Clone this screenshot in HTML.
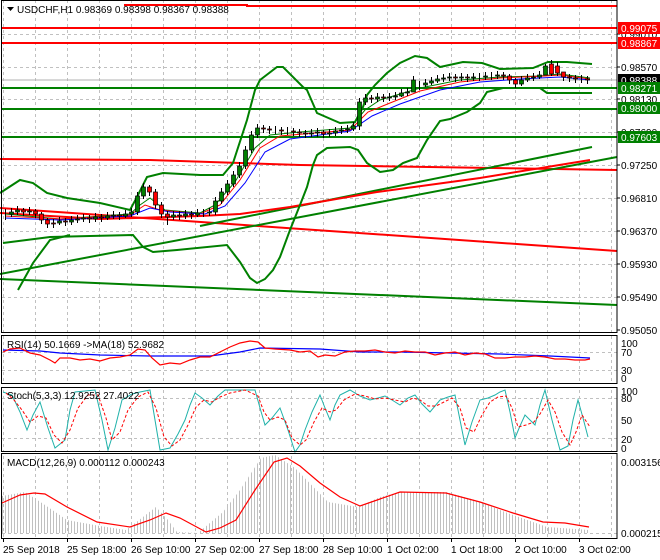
<!DOCTYPE html>
<html><head><meta charset="utf-8"><style>
html,body{margin:0;padding:0;background:#fff;}
svg{display:block;font-family:"Liberation Sans",sans-serif;font-size:10px;}
</style></head><body>
<svg width="660" height="560" xmlns="http://www.w3.org/2000/svg">
<defs>
<pattern id="vg" patternUnits="userSpaceOnUse" x="35" y="0" width="32" height="6"><rect x="0" y="0" width="1" height="3" fill="#c0c0c0"/></pattern>
<pattern id="hb" patternUnits="userSpaceOnUse" x="2" y="0" width="3" height="10"><rect x="0" y="0" width="1" height="10" fill="#c0c0c0"/></pattern>
</defs>
<rect width="660" height="560" fill="#fff"/>
<rect x="2" y="1" width="615" height="331" fill="url(#vg)"/>
<rect x="2" y="336" width="615" height="47" fill="url(#vg)"/>
<rect x="2" y="388" width="615" height="63" fill="url(#vg)"/>
<rect x="2" y="454" width="615" height="84" fill="url(#vg)"/>
<g stroke="#c0c0c0" stroke-dasharray="3,3">
<line x1="2" y1="34.5" x2="617" y2="34.5"/><line x1="2" y1="67.5" x2="617" y2="67.5"/><line x1="2" y1="99.5" x2="617" y2="99.5"/><line x1="2" y1="132.5" x2="617" y2="132.5"/><line x1="2" y1="165.5" x2="617" y2="165.5"/><line x1="2" y1="198.5" x2="617" y2="198.5"/><line x1="2" y1="231.5" x2="617" y2="231.5"/><line x1="2" y1="264.5" x2="617" y2="264.5"/><line x1="2" y1="297.5" x2="617" y2="297.5"/>
<line x1="2" y1="352.5" x2="617" y2="352.5"/><line x1="2" y1="370.5" x2="617" y2="370.5"/><line x1="2" y1="398.5" x2="617" y2="398.5"/><line x1="2" y1="438.5" x2="617" y2="438.5"/><line x1="2" y1="533.5" x2="617" y2="533.5"/>
</g>
<g stroke-width="2" fill="none">
<polyline points="124,5 247,5 247,6 617,6" stroke="#f00"/>
<line x1="2" y1="28" x2="617" y2="28" stroke="#f00"/>
<line x1="2" y1="43" x2="617" y2="43" stroke="#f00"/>
<line x1="2" y1="80" x2="617" y2="80" stroke="#b0b0b0" stroke-width="1"/>
<line x1="2" y1="88" x2="617" y2="88" stroke="#008000"/>
<line x1="2" y1="109" x2="617" y2="109" stroke="#008000"/>
<line x1="2" y1="137" x2="617" y2="137" stroke="#008000"/>
<polyline points="0,159 150,160 300,165 617,170" stroke="#f00"/>
<line x1="0" y1="208" x2="617" y2="251" stroke="#f00"/>
<line x1="0" y1="279" x2="617" y2="305" stroke="#008000"/>
<line x1="0" y1="274" x2="617" y2="157" stroke="#008000"/>
<line x1="200" y1="226" x2="592" y2="147" stroke="#008000"/>
<polyline points="0,213 100,219 200,216 240,214 290,207 377,192 480,178 590,160" stroke="#f00"/>
<polyline stroke="#008000" points="0,193 20,180 33,183 47,193 67,198 100,203 130,210 137,197 147,177 163,173 200,175 223,175 233,163 247,120 255,90 260,80 277,67 283,67 303,87 307,90 317,113 333,120 340,123 355,122 363,107 367,95 375,85 387,73 400,63 415,56 427,58 440,67 463,62 482,63 500,69 533,68 548,62 567,62 592,64"/>
<polyline stroke="#008000" points="3,243 50,237 90,236 133,235 143,247 153,252 177,250 227,245 240,262 250,278 257,283 265,279 273,270 280,257 290,230 300,205 307,187 313,165 317,155 327,148 350,147 358,150 367,163 380,172 393,170 403,163 417,158 427,140 440,121 450,119 467,112 480,103 487,92 503,88 540,88 547,93 592,93"/>
<polyline stroke="#008000" points="18,290 33,263 50,240 70,235"/>
</g>
<g fill="none" stroke-width="1">
<polyline stroke="#008000" points="5,214 60,219 130,214 140,205 150,198 165,210 200,213 215,205 235,182 255,148 270,135 300,132 350,128 365,110 380,100 420,88 460,80 500,77 540,76 560,74 590,78"/>
<polyline stroke="#f00" points="5,216 60,219 130,215 145,205 160,210 200,214 220,205 240,180 260,148 280,136 350,130 368,112 390,103 420,91 460,82 500,78 545,76 560,75 590,79"/>
<polyline stroke="#00f" points="5,218 60,220 130,216 150,208 170,212 205,214 225,206 245,183 265,152 290,139 350,131 372,116 400,104 440,90 480,82 520,79 560,77 590,80"/>
</g>
<path stroke="#000" fill="none" d="M5.5,209V220M11.5,208V217M17.5,206V215M23.5,208V216M29.5,207V215M35.5,209V218M41.5,212V224M47.5,218V228M53.5,219V228M59.5,217V225M65.5,218V226M71.5,216V225M77.5,215V223M83.5,214V222M89.5,215V223M95.5,213V222M101.5,214V222M107.5,212V220M113.5,211V219M119.5,212V220M125.5,210V218M131.5,208V217M137.5,192V215M143.5,183V199M149.5,185V196M155.5,189V209M161.5,202V218M167.5,211V225M173.5,211V220M179.5,211V220M185.5,210V219M191.5,211V219M197.5,209V217M203.5,209V217M209.5,208V216M215.5,197V215M221.5,188V204M227.5,180V195M233.5,171V187M239.5,162V178M245.5,146V169M251.5,131V153M257.5,124V138M263.5,125V133M269.5,126V134M275.5,126V134M281.5,127V135M287.5,127V135M293.5,128V136M299.5,129V137M305.5,130V138M311.5,129V137M317.5,128V137M323.5,130V138M329.5,129V137M335.5,127V136M341.5,126V134M347.5,125V133M353.5,122V131M359.5,98V130M365.5,94V105M371.5,95V103M377.5,93V102M383.5,94V102M389.5,93V101M395.5,92V100M401.5,89V97M407.5,88V96M413.5,76V92M419.5,81V90M425.5,79V87M431.5,77V85M437.5,75V83M443.5,74V82M449.5,73V81M455.5,74V82M461.5,73V81M467.5,74V82M473.5,73V81M479.5,73V81M485.5,72V80M491.5,72V80M497.5,71V79M503.5,72V80M509.5,74V84M515.5,78V88M521.5,76V86M527.5,74V82M533.5,73V81M539.5,71V79M545.5,64V75M551.5,60V76M557.5,62V76M563.5,73V81M569.5,74V82M575.5,75V83M581.5,75V83M587.5,76V84"/>
<g stroke="#000" stroke-width="0.7">
<g fill="#008000">
<rect x="9.5" y="212" width="4" height="2"/><rect x="15.5" y="210" width="4" height="2"/><rect x="27.5" y="211" width="4" height="1"/><rect x="57.5" y="221" width="4" height="2"/><rect x="69.5" y="220" width="4" height="2"/><rect x="75.5" y="219" width="4" height="1"/><rect x="81.5" y="218" width="4" height="1"/><rect x="93.5" y="217" width="4" height="2"/><rect x="105.5" y="216" width="4" height="2"/><rect x="111.5" y="215" width="4" height="1"/><rect x="123.5" y="214" width="4" height="2"/><rect x="129.5" y="212" width="4" height="2"/><rect x="135.5" y="196" width="4" height="16"/><rect x="141.5" y="187" width="4" height="9"/><rect x="171.5" y="215" width="4" height="2"/><rect x="183.5" y="214" width="4" height="2"/><rect x="195.5" y="213" width="4" height="2"/><rect x="207.5" y="212" width="4" height="1"/><rect x="213.5" y="201" width="4" height="11"/><rect x="219.5" y="192" width="4" height="9"/><rect x="225.5" y="184" width="4" height="8"/><rect x="231.5" y="175" width="4" height="9"/><rect x="237.5" y="166" width="4" height="9"/><rect x="243.5" y="150" width="4" height="16"/><rect x="249.5" y="135" width="4" height="15"/><rect x="255.5" y="128" width="4" height="7"/><rect x="309.5" y="133" width="4" height="1"/><rect x="315.5" y="132" width="4" height="1"/><rect x="327.5" y="133" width="4" height="1"/><rect x="333.5" y="131" width="4" height="2"/><rect x="339.5" y="130" width="4" height="1"/><rect x="345.5" y="129" width="4" height="1"/><rect x="351.5" y="126" width="4" height="3"/><rect x="357.5" y="102" width="4" height="24"/><rect x="363.5" y="98" width="4" height="4"/><rect x="375.5" y="97" width="4" height="2"/><rect x="387.5" y="97" width="4" height="1"/><rect x="393.5" y="96" width="4" height="1"/><rect x="399.5" y="93" width="4" height="3"/><rect x="405.5" y="92" width="4" height="1"/><rect x="411.5" y="80" width="4" height="12"/><rect x="423.5" y="83" width="4" height="2"/><rect x="429.5" y="81" width="4" height="2"/><rect x="435.5" y="79" width="4" height="2"/><rect x="441.5" y="78" width="4" height="1"/><rect x="447.5" y="77" width="4" height="1"/><rect x="459.5" y="77" width="4" height="1"/><rect x="471.5" y="77" width="4" height="1"/><rect x="483.5" y="76" width="4" height="1"/><rect x="495.5" y="75" width="4" height="1"/><rect x="519.5" y="80" width="4" height="4"/><rect x="525.5" y="78" width="4" height="2"/><rect x="531.5" y="77" width="4" height="1"/><rect x="537.5" y="75" width="4" height="2"/><rect x="543.5" y="66" width="4" height="9"/>
</g>
<g fill="#f00">
<rect x="21.5" y="210" width="4" height="2"/><rect x="33.5" y="211" width="4" height="3"/><rect x="39.5" y="214" width="4" height="6"/><rect x="45.5" y="220" width="4" height="4"/><rect x="51.5" y="223" width="4" height="1"/><rect x="63.5" y="221" width="4" height="1"/><rect x="87.5" y="218" width="4" height="1"/><rect x="99.5" y="217" width="4" height="1"/><rect x="117.5" y="215" width="4" height="1"/><rect x="147.5" y="187" width="4" height="5"/><rect x="153.5" y="192" width="4" height="13"/><rect x="159.5" y="205" width="4" height="9"/><rect x="165.5" y="214" width="4" height="3"/><rect x="177.5" y="215" width="4" height="1"/><rect x="189.5" y="214" width="4" height="1"/><rect x="261.5" y="128" width="4" height="1"/><rect x="267.5" y="129" width="4" height="1"/><rect x="279.5" y="130" width="4" height="1"/><rect x="291.5" y="131" width="4" height="1"/><rect x="297.5" y="132" width="4" height="1"/><rect x="303.5" y="133" width="4" height="1"/><rect x="321.5" y="132" width="4" height="2"/><rect x="369.5" y="98" width="4" height="1"/><rect x="381.5" y="97" width="4" height="1"/><rect x="453.5" y="77" width="4" height="1"/><rect x="465.5" y="77" width="4" height="1"/><rect x="501.5" y="75" width="4" height="1"/><rect x="507.5" y="76" width="4" height="4"/><rect x="513.5" y="80" width="4" height="4"/><rect x="549.5" y="64" width="4" height="10"/><rect x="555.5" y="66" width="4" height="7"/><rect x="561.5" y="72" width="4" height="5"/><rect x="567.5" y="77" width="4" height="1"/><rect x="573.5" y="78" width="4" height="1"/><rect x="585.5" y="79" width="4" height="1"/>
</g>
</g>
<g fill="none" stroke-width="1.2">
<polyline stroke="#00f" points="3,350 40,351 60,353 100,355 150,356 210,356 240,352 260,348 320,349 360,352 400,352 450,353 500,354 550,356 590,358"/>
<polyline stroke="#f00" points="3,352 10,349 20,348 30,353 40,355 50,360 55,363 60,358 70,358 80,360 90,359 100,361 110,358 120,357 130,355 138,349 145,350 152,358 160,365 170,363 180,364 190,360 200,357 210,357 220,352 230,347 240,343 250,341 258,342 265,348 275,349 290,350 300,352 310,351 318,357 325,355 335,356 345,352 355,351 365,351 375,350 385,352 395,353 405,351 415,352 425,352 435,355 445,353 455,352 465,355 475,353 485,354 495,358 505,358 515,357 525,357 535,356 545,357 555,359 565,359 575,360 585,360 590,359"/>
</g>
<polyline fill="none" stroke="#20b2aa" points="3,392 12,395 20,412 27,430 33,415 40,402 48,428 55,448 65,440 70,410 75,392 85,391 95,390 102,420 108,450 115,428 122,400 132,394 140,392 150,390 155,420 160,450 170,448 178,434 185,420 190,405 195,393 202,398 210,405 218,396 225,390 240,390 255,390 260,408 265,425 272,418 280,408 288,430 295,452 300,445 305,430 312,412 320,395 325,408 330,420 335,405 340,395 350,390 360,396 370,400 378,398 385,396 392,400 400,405 408,398 415,395 422,404 430,412 435,406 440,400 448,397 455,395 460,420 465,445 472,422 480,400 488,398 495,395 500,392 505,390 510,412 515,438 520,426 525,415 530,420 535,425 540,405 545,390 552,420 560,450 568,446 573,420 578,400 583,418 588,437"/>
<polyline fill="none" stroke="#f00" stroke-dasharray="3,2" points="6,393 14,400 22,410 30,422 38,416 46,418 54,435 62,443 70,430 78,408 88,395 98,395 106,418 112,440 120,432 128,410 138,397 148,392 156,408 164,437 172,446 180,440 188,425 196,407 204,400 212,402 220,397 230,393 245,390 258,396 264,412 270,420 278,417 285,420 292,438 300,445 306,440 314,422 322,408 330,412 336,410 344,400 355,394 365,396 375,399 385,398 395,400 405,402 413,398 420,400 428,406 436,406 444,402 452,398 460,408 466,428 474,432 482,415 490,402 498,397 506,396 512,408 518,427 526,425 534,422 540,414 548,400 555,412 562,432 570,445 576,432 582,415 590,427"/>
<polygon fill="url(#hb)" points="2,533 2,496 25,492 45,505 67,520 100,526 126,530 156,507 168,520 177,532 198,533 223,512 240,490 261,458 275,455 295,468 328,502 358,507 380,497 400,492 446,492 475,500 505,512 547,527 589,530 589,533"/>
<polyline fill="none" stroke="#f00" stroke-width="1.2" points="2,503 20,495 34,493 45,494 67,507 97,522 130,527 150,520 166,513 180,518 206,532 220,528 236,520 255,490 274,462 287,458 300,466 320,483 340,497 360,506 380,499 400,492 446,493 480,502 513,513 543,522 565,523 589,527"/>
<g fill="none" stroke="#000" stroke-width="1">
<rect x="1.5" y="0.5" width="615.5" height="332"/>
<rect x="1.5" y="335.5" width="615.5" height="48"/>
<rect x="1.5" y="387.5" width="615.5" height="64"/>
<rect x="1.5" y="453.5" width="615.5" height="85"/>
</g>
<g fill="#000">
<path d="M7,7 L14,7 L10.5,11 Z"/>
<text x="17" y="13">USDCHF,H1  0.98369 0.98398 0.98367 0.98388</text>
<text x="7" y="348">RSI(14) 50.1669  -&gt;MA(18) 52.9682</text>
<text x="7" y="399">Stoch(5,3,3) 12.9252 27.4022</text>
<text x="7" y="466">MACD(12,26,9) 0.000112 0.000243</text>
<text x="621" y="38">0.99010</text><text x="621" y="71">0.98570</text><text x="621" y="103">0.98130</text><text x="621" y="136">0.97690</text><text x="621" y="169">0.97250</text><text x="621" y="202">0.96810</text><text x="621" y="235">0.96370</text><text x="621" y="268">0.95930</text><text x="621" y="301">0.95490</text><text x="621" y="334">0.95050</text>
<text x="621" y="347">100</text><text x="621" y="356">70</text><text x="621" y="374">30</text><text x="621" y="382">0</text>
<text x="621" y="395">100</text><text x="621" y="402">80</text><text x="621" y="424">50</text><text x="621" y="443">20</text><text x="621" y="452">0</text>
<text x="621" y="466">0.003156</text><text x="621" y="537">0.000215</text>
<text x="3" y="553">25 Sep 2018</text><text x="67" y="553">25 Sep 18:00</text><text x="131" y="553">26 Sep 10:00</text><text x="195" y="553">27 Sep 02:00</text><text x="259" y="553">27 Sep 18:00</text><text x="323" y="553">28 Sep 10:00</text><text x="387" y="553">1 Oct 02:00</text><text x="451" y="553">1 Oct 18:00</text><text x="515" y="553">2 Oct 10:00</text><text x="579" y="553">3 Oct 02:00</text>
</g>
<path stroke="#000" d="M3.5,538V542M67.5,538V542M131.5,538V542M195.5,538V542M259.5,538V542M323.5,538V542M387.5,538V542M451.5,538V542M515.5,538V542M579.5,538V542M617,34H620M617,67H620M617,99H620M617,132H620M617,165H620M617,198H620M617,231H620M617,264H620M617,297H620M617,330H620"/>
<g>
<rect x="618" y="22" width="42" height="12" fill="#f00"/><text x="621" y="32" fill="#fff">0.99075</text>
<rect x="618" y="37" width="42" height="12" fill="#f00"/><text x="621" y="47" fill="#fff">0.98867</text>
<rect x="618" y="74" width="42" height="12" fill="#000"/><text x="621" y="84" fill="#fff">0.98388</text>
<rect x="618" y="82" width="42" height="12" fill="#008000"/><text x="621" y="92" fill="#fff">0.98271</text>
<rect x="618" y="102" width="42" height="12" fill="#008000"/><text x="621" y="112" fill="#fff">0.98000</text>
<rect x="618" y="131" width="42" height="12" fill="#008000"/><text x="621" y="141" fill="#fff">0.97603</text>
</g>
</svg>
</body></html>
